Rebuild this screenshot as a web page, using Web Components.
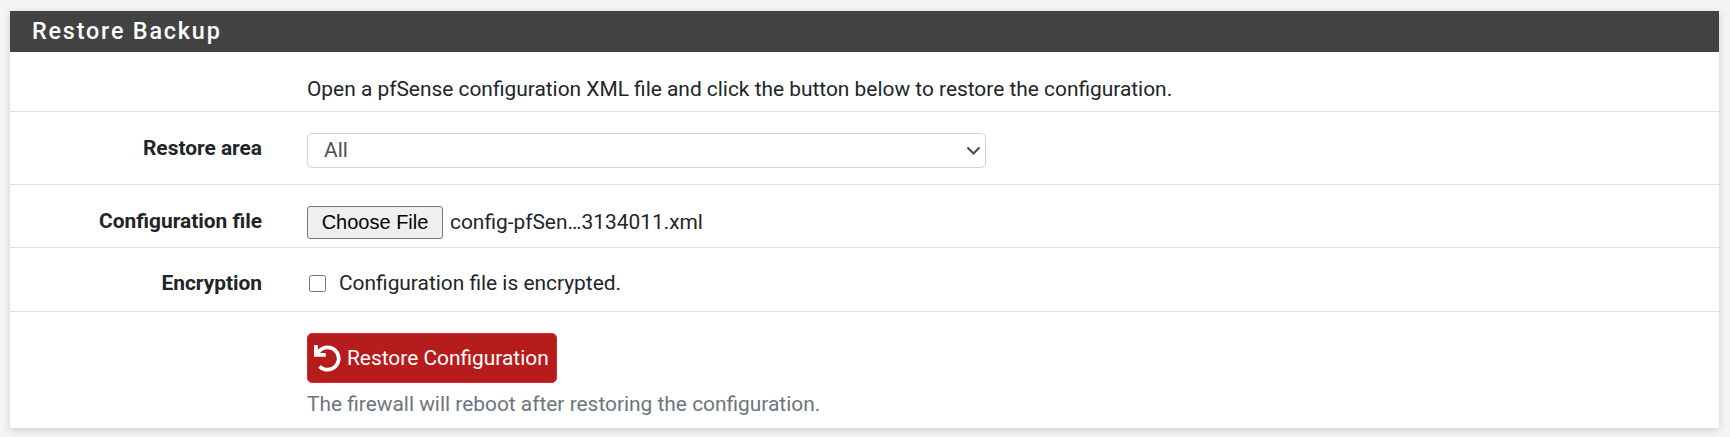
<!DOCTYPE html>
<html>
<head>
<meta charset="utf-8">
<title>Restore Backup</title>
<style>
	html, body {
		margin: 0;
		background: #f5f5f5;
	}
	body {
		padding: 11px 11px 9px 10px;
		font-family: Roboto, "Liberation Sans", sans-serif;
		font-size: 20.9px;
		line-height: 31px;
		color: #212529;
	}
	small {
		margin-top: 6px;
		font-size: 20.9px;
		color: #6c757d;
	}
</style>
</head>
<body>

<pf-panel heading="Restore Backup">
	<pf-row style="--row-height: 60px; --row-pad: 22px">
		<span>Open a pfSense configuration XML file and click the button below to restore the configuration.</span>
	</pf-row>
	<pf-row label="Restore area" style="--row-height: 73px">
		<pf-select value="All"></pf-select>
	</pf-row>
	<pf-row label="Configuration file" style="--row-height: 63px">
		<pf-file name="config-pfSen…3134011.xml"></pf-file>
	</pf-row>
	<pf-row label="Encryption" style="--row-height: 64px; --row-pad: 20px">
		<pf-check>Configuration file is encrypted.</pf-check>
	</pf-row>
	<pf-row last style="--row-height: 116px">
		<pf-button>Restore Configuration</pf-button>
		<small>The firewall will reboot after restoring the configuration.</small>
	</pf-row>
</pf-panel>

<script>
class PfPanel extends HTMLElement {
	constructor() {
		super();
		this.attachShadow({mode: 'open'});
		this.shadowRoot.innerHTML = `
			<style>
			:host {
				display: block;
				background: #fff;
				box-shadow: 0 2px 8px rgba(0, 0, 0, .16);
			}
			h2 {
				margin: 0;
				height: 41px;
				box-sizing: border-box;
				padding-left: 22px;
				display: flex;
				align-items: center;
				background: #424242;
				color: #fff;
				font-size: 23.4px;
				font-weight: 500;
				letter-spacing: 1.8px;
			}
			</style>
			<h2>${this.getAttribute('heading')}</h2>
			<slot></slot>
		`;
	}
}

class PfRow extends HTMLElement {
	constructor() {
		super();
		this.attachShadow({mode: 'open'});
		const label = this.getAttribute('label') || '';
		this.shadowRoot.innerHTML = `
			<style>
			:host {
				display: grid;
				grid-template-columns: 252px 1fr;
				column-gap: 45px;
				box-sizing: border-box;
				height: var(--row-height, 60px);
				padding-top: var(--row-pad, 21px);
				border-bottom: 1px solid #dee2e6;
				align-items: start;
			}
			:host([last]) {
				border-bottom: 0;
			}
			.label {
				text-align: right;
				font-weight: 700;
			}
			.field {
				display: flex;
				flex-direction: column;
				align-items: flex-start;
			}
			</style>
			<div class="label">${label}</div>
			<div class="field"><slot></slot></div>
		`;
	}
}

class PfSelect extends HTMLElement {
	constructor() {
		super();
		this.attachShadow({mode: 'open'});
		this.shadowRoot.innerHTML = `
			<style>
			:host {
				display: block;
				position: relative;
				width: 679px;
			}
			select {
				display: block;
				width: 100%;
				height: 35px;
				padding: 0 16px;
				appearance: none;
				background: #fff;
				border: 1px solid #ced4da;
				border-radius: 5px;
				font: inherit;
				color: #495057;
			}
			svg {
				position: absolute;
				right: 5px;
				top: 13px;
				pointer-events: none;
			}
			</style>
			<select><option>${this.getAttribute('value')}</option></select>
			<svg width="15" height="9" viewBox="0 0 15 9" fill="none" stroke="#495057" stroke-width="2.2"><path d="M1.5 1.5l6 6 6-6"/></svg>
		`;
	}
}

class PfFile extends HTMLElement {
	constructor() {
		super();
		this.attachShadow({mode: 'open'});
		this.shadowRoot.innerHTML = `
			<style>
			:host {
				display: flex;
				align-items: center;
				gap: 7px;
			}
			button {
				width: 136px;
				height: 33px;
				padding: 0;
				background: #efefef;
				border: 1px solid #767676;
				border-radius: 3px;
				font: 20px "Liberation Sans", Arial, sans-serif;
				color: #000;
			}
			</style>
			<button>Choose File</button>
			<span>${this.getAttribute('name')}</span>
		`;
	}
}

class PfCheck extends HTMLElement {
	constructor() {
		super();
		this.attachShadow({mode: 'open'});
		this.shadowRoot.innerHTML = `
			<style>
			:host {
				display: flex;
				align-items: center;
				gap: 13px;
			}
			input {
				margin: 0 0 0 2px;
				width: 17px;
				height: 17px;
			}
			</style>
			<input type="checkbox">
			<span><slot></slot></span>
		`;
	}
}

class PfButton extends HTMLElement {
	constructor() {
		super();
		this.attachShadow({mode: 'open'});
		this.shadowRoot.innerHTML = `
			<style>
			:host {
				display: inline-flex;
				align-items: center;
				gap: 6px;
				box-sizing: border-box;
				width: 250px;
				height: 50px;
				padding-left: 6px;
				background: #b71c1c;
				border: 1px solid #d32f2f;
				border-radius: 5px;
				color: #fff;
			}
			svg {
				width: 27px;
				height: 27px;
				fill: currentColor;
			}
			</style>
			<svg viewBox="0 0 512 512"><path d="M212.333 224.333H12c-6.627 0-12-5.373-12-12V12C0 5.373 5.373 0 12 0h48c6.627 0 12 5.373 12 12v78.112C117.773 39.279 184.26 7.47 258.175 8.007c136.906.994 246.448 111.623 246.157 248.532C504.041 393.258 393.12 504 256.333 504c-64.089 0-122.496-24.313-166.51-64.215-5.099-4.622-5.334-12.554-.467-17.42l33.967-33.967c4.474-4.474 11.662-4.717 16.401-.525C170.76 415.336 211.58 432 256.333 432c97.268 0 176-78.716 176-176 0-97.267-78.716-176-176-176-58.496 0-110.28 28.476-142.274 72.333h98.274c6.627 0 12 5.373 12 12v48c0 6.627-5.373 12-12 12z"/></svg>
			<span><slot></slot></span>
		`;
	}
}

customElements.define('pf-panel', PfPanel);
customElements.define('pf-row', PfRow);
customElements.define('pf-select', PfSelect);
customElements.define('pf-file', PfFile);
customElements.define('pf-check', PfCheck);
customElements.define('pf-button', PfButton);
</script>
</body>
</html>
